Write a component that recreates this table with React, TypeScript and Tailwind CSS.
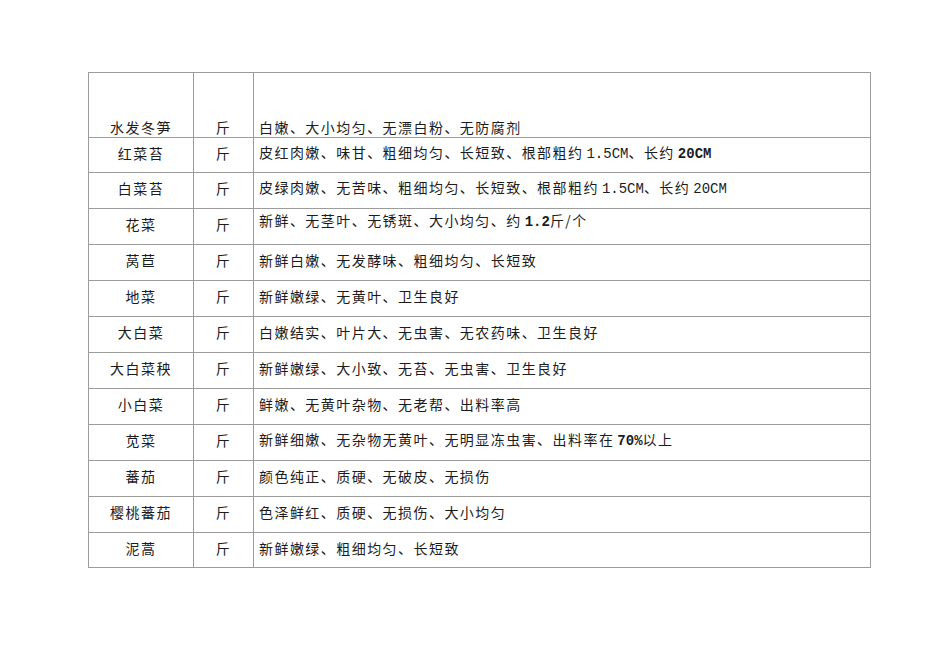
const ROWS = [
  { name: '红菜苔', desc: '皮红肉嫩、味甘、粗细均匀、长短致、根部粗约|1.5CM|、长约|*20CM' },
  { name: '白菜苔', desc: '皮绿肉嫩、无苦味、粗细均匀、长短致、根部粗约|1.5CM|、长约|20CM' },
  { name: '花菜', desc: '新鲜、无茎叶、无锈斑、大小均匀、约|*1.2|斤/个', top: true },
  { name: '莴苣', desc: '新鲜白嫩、无发酵味、粗细均匀、长短致' },
  { name: '地菜', desc: '新鲜嫩绿、无黄叶、卫生良好' },
  { name: '大白菜', desc: '白嫩结实、叶片大、无虫害、无农药味、卫生良好' },
  { name: '大白菜秧', desc: '新鲜嫩绿、大小致、无苔、无虫害、卫生良好' },
  { name: '小白菜', desc: '鲜嫩、无黄叶杂物、无老帮、出料率高' },
  { name: '苋菜', desc: '新鲜细嫩、无杂物无黄叶、无明显冻虫害、出料率在|*70%|以上' },
  { name: '蕃茄', desc: '颜色纯正、质硬、无破皮、无损伤' },
  { name: '樱桃蕃茄', desc: '色泽鲜红、质硬、无损伤、大小均匀' },
  { name: '泥蒿', desc: '新鲜嫩绿、粗细均匀、长短致' },
];

// "|" separates latin runs; a leading "*" makes the run bold
function Desc({ text }: { text: string }) {
  const parts = text.split('|');
  return (
    <>
      {parts.map((p, i) =>
        i % 2 === 0 ? (
          <span key={i}>{p}</span>
        ) : (
          <span
            key={i}
            className={`ml-[3px] tracking-[0px] font-['Liberation_Mono',monospace] ${p.startsWith('*') ? 'font-bold' : ''}`}
          >
            {p.replace('*', '')}
          </span>
        ),
      )}
    </>
  );
}

export default function App() {
  return (
    <div className="min-h-[672px] w-[950px] bg-white pt-[72px] pl-[88px] font-['Noto_Sans_CJK_SC',sans-serif] text-[14px] tracking-[1.45px] text-[#1c1c1c]">
      <div className="grid w-[783px] grid-cols-[105px_60px_617px] border-t border-l border-[#9c9c9c]">
        <div className="flex h-[65px] items-end justify-center border-r border-b border-[#9c9c9c] pb-[1px] leading-[18px]">
          水发冬笋
        </div>
        <div className="flex h-[65px] items-end justify-center border-r border-b border-[#9c9c9c] pb-[1px] leading-[18px]">
          斤
        </div>
        <div className="flex h-[65px] items-end border-r border-b border-[#9c9c9c] pb-[1px] pl-[5px] leading-[18px]">
          白嫩、大小均匀、无漂白粉、无防腐剂
        </div>
        {ROWS.map((row, i) => {
          const h = i === 0 || i === ROWS.length - 1 ? 'h-[35px]' : 'h-[36px]';
          return (
            <div key={row.name} className="contents">
              <div className={`flex ${h} items-center justify-center border-r border-b border-[#9c9c9c] pb-[4px]`}>
                {row.name}
              </div>
              <div className={`flex ${h} items-center justify-center border-r border-b border-[#9c9c9c] pb-[4px]`}>
                斤
              </div>
              <div
                className={`flex ${h} border-r border-b border-[#9c9c9c] pl-[5px] ${
                  row.top ? 'items-start leading-[22px]' : 'items-center pb-[4px]'
                }`}
              >
                <span className="whitespace-nowrap">
                  <Desc text={row.desc} />
                </span>
              </div>
            </div>
          );
        })}
      </div>
    </div>
  );
}
